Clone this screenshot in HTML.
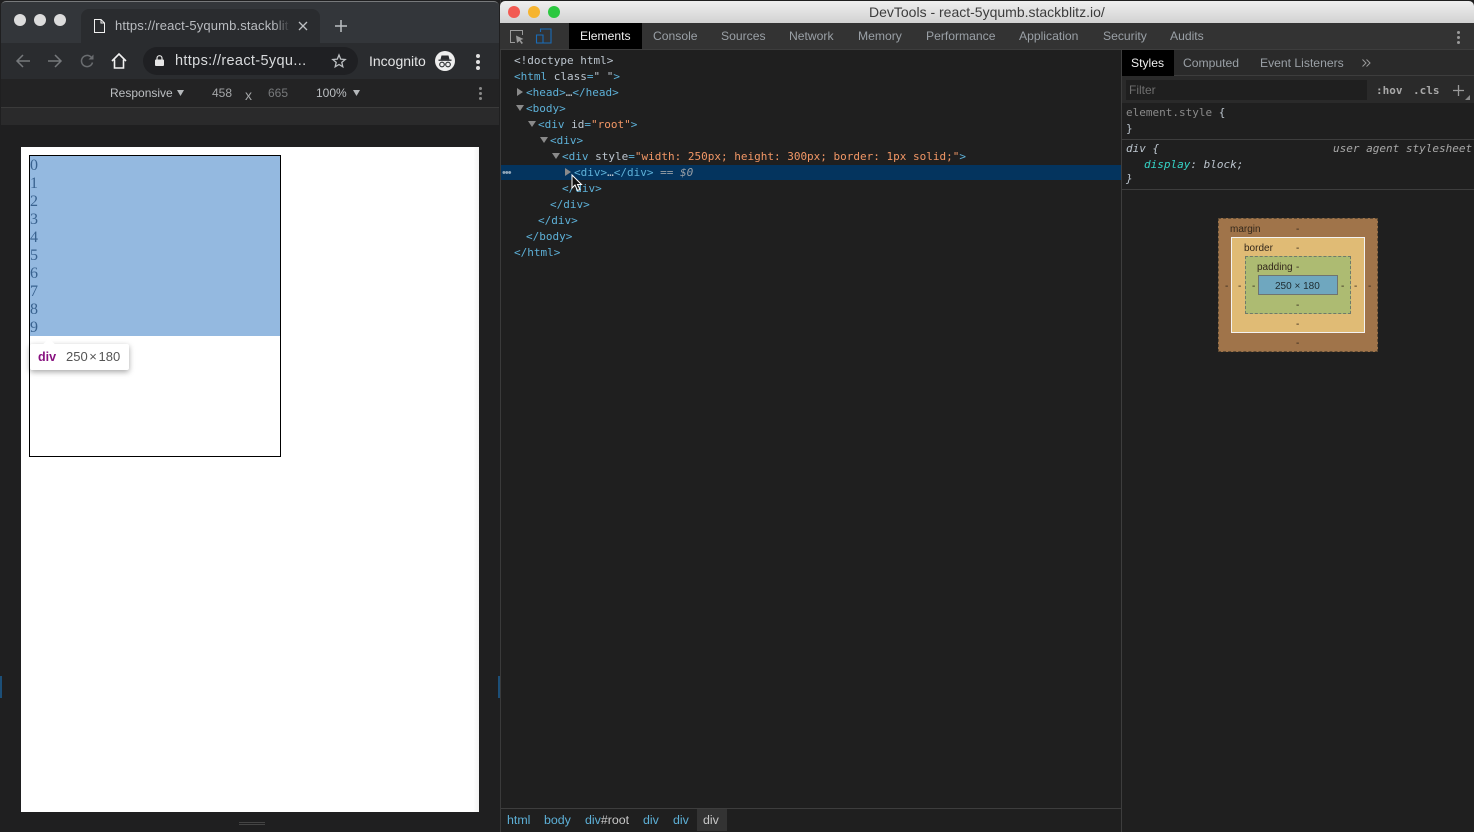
<!DOCTYPE html>
<html><head><meta charset="utf-8"><style>
html,body{margin:0;padding:0;width:1474px;height:832px;overflow:hidden;background:#1d1d1e}
body{position:relative;font-family:"Liberation Sans",sans-serif}
.a{position:absolute}
.t{position:absolute;white-space:pre;line-height:16px}
.m{font-family:"DejaVu Sans Mono","Liberation Mono",monospace;font-size:11px;color:#5db0d7;margin-top:1px}
.o{color:#f29766}.g{color:#9aa0a6}.l{color:#bdc6cf}
.tab{font-size:12.15px;color:#9aa0a6}
.b{font-size:10px;color:#33281c;margin-top:1px}
.c{font-size:12.4px;color:#5db0d7}
svg{position:absolute;overflow:visible}
</style></head><body>

<!-- left chrome window -->
<div class="a" style="left:0;top:0;width:500px;height:832px;background:#1f1f20"></div>
<div class="a" style="left:1px;top:1px;width:498px;height:78px;background:#33363a;border-top:1px solid #77797b;border-radius:5px 5px 0 0;box-sizing:border-box"></div>
<div class="a" style="left:81px;top:9px;width:239px;height:34px;background:#2a2c2f;border-radius:8px 8px 0 0"></div>
<div class="a" style="left:1px;top:43px;width:498px;height:36px;background:#2a2c2f"></div>
<div class="a" style="left:14px;top:14px;width:12px;height:12px;border-radius:50%;background:#dcdcdc"></div>
<div class="a" style="left:34px;top:14px;width:12px;height:12px;border-radius:50%;background:#dcdcdc"></div>
<div class="a" style="left:54px;top:14px;width:12px;height:12px;border-radius:50%;background:#dcdcdc"></div>
<svg style="left:94px;top:19px" width="11" height="14"><path d="M.5.5H7L10.500 4V13.500H.5Z M7 .5V4H10.500" fill="none" stroke="#f0f0f0"/></svg>
<div class="t" style="left:115px;top:18px;font-size:13px;letter-spacing:.15px;color:#b9bcc0;width:174px;overflow:hidden">https://react-5yqumb.stackblitz</div>
<div class="a" style="left:274px;top:14px;width:16px;height:24px;background:linear-gradient(90deg,rgba(42,44,47,0),#2a2c2f)"></div>
<svg style="left:298px;top:21px" width="10" height="10"><path d="M1 1L9 9M9 1L1 9" stroke="#bdc0c3" stroke-width="1.300"/></svg>
<svg style="left:335px;top:20px" width="12" height="12"><path d="M6 0V12M0 6H12" stroke="#bdc0c3" stroke-width="1.500"/></svg>

<svg style="left:16px;top:54px" width="14" height="14"><path d="M14 7H1M7 1L1 7L7 13" fill="none" stroke="#76797c" stroke-width="1.500"/></svg>
<svg style="left:48px;top:54px" width="14" height="14"><path d="M0 7H13M7 1L13 7L7 13" fill="none" stroke="#76797c" stroke-width="1.500"/></svg>
<svg style="left:80px;top:54px" width="14" height="14"><path d="M12.500 8.500A5.600 5.600 0 1 1 11 3" fill="none" stroke="#6a6d70" stroke-width="1.500"/><path d="M13.500 .5V5.500H8.500Z" fill="#6a6d70"/></svg>
<svg style="left:111px;top:53px" width="16" height="16"><path d="M1 8L8 1L15 8M3.500 6.500V15H12.500V6.500" fill="none" stroke="#f2f2f2" stroke-width="1.600"/></svg>
<div class="a" style="left:143px;top:47px;width:215px;height:28px;border-radius:14px;background:#1f2023"></div>
<svg style="left:155px;top:55px" width="9" height="11"><path d="M2 5V3.200A2.500 2.500 0 0 1 7 3.200V5" fill="none" stroke="#e6e6e6" stroke-width="1.200"/><rect y="4.500" width="9" height="6.500" rx="1" fill="#e6e6e6"/></svg>
<div class="t" style="left:175px;top:53px;font-size:14.500px;letter-spacing:.35px;color:#d9dbdd">https://react-5yqu...</div>
<svg style="left:332px;top:54px" width="14" height="14"><path d="M7 1L8.700 5.100L13.200 5.500L9.800 8.400L10.800 12.800L7 10.500L3.200 12.800L4.200 8.400L.8 5.500L5.300 5.100Z" fill="none" stroke="#bdc0c3" stroke-width="1.300"/></svg>
<div class="t" style="left:369px;top:53px;font-size:14px;color:#e4e5e6">Incognito</div>
<div class="a" style="left:435px;top:51px;width:20px;height:20px;border-radius:50%;background:#eeeeee"></div>
<svg style="left:435px;top:51px" width="20" height="20"><path d="M6.500 4.500H13.500L14.500 8.500H5.500Z" fill="#2a2c2f"/><path d="M3.500 9.200H16.500" stroke="#2a2c2f" stroke-width="1.300"/><circle cx="7" cy="13.500" r="2.300" fill="none" stroke="#2a2c2f" stroke-width="1.100"/><circle cx="13" cy="13.500" r="2.300" fill="none" stroke="#2a2c2f" stroke-width="1.100"/></svg>
<div class="a" style="left:476px;top:54px;width:4px;height:4px;border-radius:50%;background:#e0e0e0"></div>
<div class="a" style="left:476px;top:60px;width:4px;height:4px;border-radius:50%;background:#e0e0e0"></div>
<div class="a" style="left:476px;top:66px;width:4px;height:4px;border-radius:50%;background:#e0e0e0"></div>

<!-- device toolbar -->
<div class="a" style="left:1px;top:79px;width:498px;height:28px;background:#232324;border-bottom:1px solid #3a3a3a"></div>
<div class="a" style="left:1px;top:108px;width:498px;height:17px;background:#2a2a2b"></div>
<div class="t" style="left:110px;top:85px;font-size:12px;color:#bcbfc2">Responsive</div>
<svg style="left:177px;top:90px" width="7" height="6"><path d="M0 0H7L3.500 6Z" fill="#b5b8bb"/></svg>
<div class="t" style="left:212px;top:85px;font-size:12px;color:#a4a6a8">458</div>
<div class="t" style="left:245px;top:87px;font-size:14px;color:#a4a6a8">x</div>
<div class="t" style="left:268px;top:85px;font-size:12px;color:#77797b">665</div>
<div class="t" style="left:316px;top:85px;font-size:12px;color:#bcbfc2">100%</div>
<svg style="left:353px;top:90px" width="7" height="6"><path d="M0 0H7L3.500 6Z" fill="#b5b8bb"/></svg>
<div class="a" style="left:479px;top:87px;width:3px;height:3px;border-radius:50%;background:#8a8a8a"></div>
<div class="a" style="left:479px;top:92px;width:3px;height:3px;border-radius:50%;background:#8a8a8a"></div>
<div class="a" style="left:479px;top:97px;width:3px;height:3px;border-radius:50%;background:#8a8a8a"></div>

<!-- page -->
<div class="a" style="left:21px;top:147px;width:458px;height:665px;background:linear-gradient(90deg,#fff 98.800%,#f2f2f2)"></div>
<div class="a" style="left:29px;top:155px;width:252px;height:302px;border:1px solid #000;box-sizing:border-box;background:#fff"></div>
<div class="a" style="left:30px;top:156px;width:250px;height:180px;background:#94b9e0"></div>
<div class="a" style="left:30px;top:157px;font-family:'Liberation Serif',serif;font-size:16px;line-height:18px;color:#39628f">0<br>1<br>2<br>3<br>4<br>5<br>6<br>7<br>8<br>9</div>
<div class="a" style="left:30px;top:344px;width:99px;height:26px;background:#fff;border-radius:2px;box-shadow:0 2px 6px rgba(0,0,0,.35)"></div>
<div class="a" style="left:45px;top:340px;width:8px;height:8px;background:#fff;transform:rotate(45deg)"></div>
<div class="t" style="left:38px;top:349px;font-size:12.500px;font-weight:bold;color:#881280">div</div>
<div class="t" style="left:66px;top:349px;font-size:13px;word-spacing:-2px;color:#555">250 × 180</div>
<div class="a" style="left:239px;top:822px;width:26px;height:1px;background:#444"></div>
<div class="a" style="left:239px;top:824px;width:26px;height:1px;background:#444"></div>
<div class="a" style="left:0;top:676px;width:2px;height:22px;background:#1c4f78"></div>

<!-- devtools -->
<div class="a" style="left:500px;top:0;width:974px;height:832px;background:#1f1f1f;border-left:1px solid #3a3a3a;box-sizing:border-box"></div>
<div class="a" style="left:500px;top:1px;width:974px;height:22px;background:linear-gradient(#efefef,#d2d2d2);border-radius:5px 5px 0 0"></div>
<div class="a" style="left:508px;top:6px;width:12px;height:12px;border-radius:50%;background:#f25a52"></div>
<div class="a" style="left:528px;top:6px;width:12px;height:12px;border-radius:50%;background:#f6b42f"></div>
<div class="a" style="left:548px;top:6px;width:12px;height:12px;border-radius:50%;background:#2cc840"></div>
<div class="t" style="left:869px;top:4px;font-size:14px;color:#3c3c3c">DevTools - react-5yqumb.stackblitz.io/</div>

<div class="a" style="left:500px;top:23px;width:974px;height:27px;background:#333;border-bottom:1px solid #3d3d3d;box-sizing:border-box"></div>
<svg style="left:510px;top:30px" width="14" height="14"><path d="M5 12.500H.5V.5H12.500V5" fill="none" stroke="#9a9a9a"/><path d="M6 5.500L13.500 9L10.500 10L13 13L11.500 14L9.500 11L7 13Z" fill="#9a9a9a"/></svg>
<svg style="left:536px;top:28px" width="16" height="16"><path d="M4.500 4V1H15V15H7M.5 7H7V15H.5Z" fill="none" stroke="#1a6cb8" stroke-width="1.100"/></svg>
<div class="a" style="left:569px;top:23px;width:73px;height:26px;background:#000"></div>
<div class="t tab" style="left:580px;top:28px;color:#f0f0f0">Elements</div>
<div class="t tab" style="left:653px;top:28px">Console</div>
<div class="t tab" style="left:721px;top:28px">Sources</div>
<div class="t tab" style="left:789px;top:28px">Network</div>
<div class="t tab" style="left:858px;top:28px">Memory</div>
<div class="t tab" style="left:926px;top:28px">Performance</div>
<div class="t tab" style="left:1019px;top:28px">Application</div>
<div class="t tab" style="left:1103px;top:28px">Security</div>
<div class="t tab" style="left:1170px;top:28px">Audits</div>
<div class="a" style="left:1457px;top:31px;width:3px;height:3px;border-radius:50%;background:#9a9a9a"></div>
<div class="a" style="left:1457px;top:36px;width:3px;height:3px;border-radius:50%;background:#9a9a9a"></div>
<div class="a" style="left:1457px;top:41px;width:3px;height:3px;border-radius:50%;background:#9a9a9a"></div>

<!-- DOM tree -->
<div class="a" style="left:501px;top:165px;width:620px;height:15px;background:#04345e"></div>
<div class="t m l" style="left:514px;top:52px">&lt;!doctype html&gt;</div>
<div class="t m" style="left:514px;top:68px">&lt;html <span class="l">class</span>=<span class="l">" "</span>&gt;</div>
<svg style="left:517px;top:88px" width="6" height="8"><path d="M0 0L6 4L0 8Z" fill="#8a8a8a"/></svg>
<div class="t m" style="left:526px;top:84px">&lt;head&gt;<span class="l">…</span>&lt;/head&gt;</div>
<svg style="left:516px;top:105px" width="8" height="6"><path d="M0 0H8L4 6Z" fill="#8a8a8a"/></svg>
<div class="t m" style="left:526px;top:100px">&lt;body&gt;</div>
<svg style="left:528px;top:121px" width="8" height="6"><path d="M0 0H8L4 6Z" fill="#8a8a8a"/></svg>
<div class="t m" style="left:538px;top:116px">&lt;div <span class="l">id</span>=<span class="o">"root"</span>&gt;</div>
<svg style="left:540px;top:137px" width="8" height="6"><path d="M0 0H8L4 6Z" fill="#8a8a8a"/></svg>
<div class="t m" style="left:550px;top:132px">&lt;div&gt;</div>
<svg style="left:552px;top:153px" width="8" height="6"><path d="M0 0H8L4 6Z" fill="#8a8a8a"/></svg>
<div class="t m" style="left:562px;top:148px">&lt;div <span class="l">style</span>=<span class="o">"width: 250px; height: 300px; border: 1px solid;"</span>&gt;</div>
<div class="t" style="left:502px;top:165px;font-size:11px;color:#8fa5b8;letter-spacing:-1px">•••</div>
<svg style="left:565px;top:168px" width="6" height="8"><path d="M0 0L6 4L0 8Z" fill="#8a8a8a"/></svg>
<div class="t m" style="left:574px;top:164px">&lt;div&gt;<span class="l">…</span>&lt;/div&gt; <span class="g">==</span> <i class="g">$0</i></div>
<div class="t m" style="left:562px;top:180px">&lt;/div&gt;</div>
<svg style="left:571px;top:174px" width="12" height="18"><path d="M1 1V14L4 11L6.500 16.500L9 15.500L6.500 10.500H10.500Z" fill="#111" stroke="#fff"/></svg>
<div class="t m" style="left:550px;top:196px">&lt;/div&gt;</div>
<div class="t m" style="left:538px;top:212px">&lt;/div&gt;</div>
<div class="t m" style="left:526px;top:228px">&lt;/body&gt;</div>
<div class="t m" style="left:514px;top:244px">&lt;/html&gt;</div>
<div class="a" style="left:498px;top:676px;width:2px;height:22px;background:#1c4f78"></div>

<!-- breadcrumbs -->
<div class="a" style="left:501px;top:808px;width:620px;height:1px;background:#3d3d3d"></div>
<div class="a" style="left:697px;top:809px;width:30px;height:22px;background:#333"></div>
<div class="t c" style="left:507px;top:812px">html</div>
<div class="t c" style="left:544px;top:812px">body</div>
<div class="t c" style="left:585px;top:812px">div<span style="color:#c8c8c8">#root</span></div>
<div class="t c" style="left:643px;top:812px">div</div>
<div class="t c" style="left:673px;top:812px">div</div>
<div class="t c" style="left:703px;top:812px;color:#c8c8c8">div</div>

<!-- styles pane -->
<div class="a" style="left:1121px;top:50px;width:1px;height:782px;background:#3d3d3d"></div>
<div class="a" style="left:1122px;top:50px;width:352px;height:26px;background:#2a2a2a;border-bottom:1px solid #3d3d3d;box-sizing:border-box"></div>
<div class="a" style="left:1122px;top:50px;width:52px;height:26px;background:#000"></div>
<div class="t tab" style="left:1131px;top:55px;color:#f0f0f0">Styles</div>
<div class="t tab" style="left:1183px;top:55px">Computed</div>
<div class="t tab" style="left:1260px;top:55px">Event Listeners</div>
<svg style="left:1362px;top:59px" width="9" height="8"><path d="M.5 .5L4 4L.5 7.500M4.500 .5L8 4L4.500 7.500" fill="none" stroke="#9a9a9a"/></svg>
<div class="a" style="left:1122px;top:76px;width:352px;height:27px;background:#2a2a2a"></div>
<div class="a" style="left:1126px;top:80px;width:241px;height:20px;background:#1f1f1f"></div>
<div class="t" style="left:1129px;top:82px;font-size:12px;color:#6f6f6f">Filter</div>
<div class="t m" style="left:1376px;top:82px;color:#a8a8a8;font-weight:bold">:hov</div>
<div class="t m" style="left:1413px;top:82px;color:#a8a8a8;font-weight:bold">.cls</div>
<svg style="left:1453px;top:85px" width="11" height="11"><path d="M5.500 0V11M0 5.500H11" stroke="#9a9a9a" stroke-width="1.300"/></svg>
<svg style="left:1465px;top:95px" width="5" height="5"><path d="M5 0V5H0Z" fill="#8a8a8a"/></svg>
<div class="t m" style="left:1126px;top:104px;color:#8a8a8a">element.style <span class="l">{</span></div>
<div class="t m l" style="left:1126px;top:120px">}</div>
<div class="a" style="left:1122px;top:139px;width:352px;height:1px;background:#3d3d3d"></div>
<div class="t m l" style="left:1126px;top:140px"><i>div {</i></div>
<div class="t m" style="left:1333px;top:140px;color:#a8a8a8"><i>user agent stylesheet</i></div>
<div class="t m l" style="left:1144px;top:156px"><i><span style="color:#35d4c7">display</span>: block;</i></div>
<div class="t m l" style="left:1126px;top:170px"><i>}</i></div>
<div class="a" style="left:1122px;top:189px;width:352px;height:1px;background:#3d3d3d"></div>

<!-- box model -->
<div class="a" style="left:1218px;top:218px;width:160px;height:134px;background:#a0744a;border:1px dashed #5e4a33;box-sizing:border-box"></div>
<div class="a" style="left:1231px;top:237px;width:134px;height:96px;background:#e0bb75;border:1px solid #f3f3f3;box-sizing:border-box"></div>
<div class="a" style="left:1245px;top:256px;width:106px;height:58px;background:#adbb72;border:1px dashed #6f7a6a;box-sizing:border-box"></div>
<div class="a" style="left:1258px;top:275px;width:80px;height:20px;background:#6fa7bf;border:1px solid #6f7470;box-sizing:border-box"></div>
<div class="t b" style="left:1230px;top:221px">margin</div>
<div class="t b" style="left:1244px;top:240px">border</div>
<div class="t b" style="left:1257px;top:259px">padding</div>
<div class="t b" style="left:1275px;top:278px;color:#1d2b30">250 × 180</div>
<div class="t b" style="left:1296px;top:221px">-</div>
<div class="t b" style="left:1296px;top:240px">-</div>
<div class="t b" style="left:1296px;top:259px">-</div>
<div class="t b" style="left:1296px;top:297px">-</div>
<div class="t b" style="left:1296px;top:316px">-</div>
<div class="t b" style="left:1296px;top:335px">-</div>
<div class="t b" style="left:1225px;top:278px">-</div>
<div class="t b" style="left:1238px;top:278px">-</div>
<div class="t b" style="left:1252px;top:278px">-</div>
<div class="t b" style="left:1341px;top:278px">-</div>
<div class="t b" style="left:1354px;top:278px">-</div>
<div class="t b" style="left:1368px;top:278px">-</div>
</body></html>
